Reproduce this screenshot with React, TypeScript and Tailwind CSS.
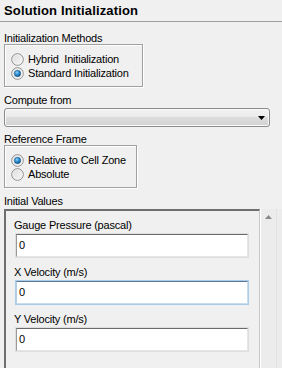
import React from "react";

const Radio = ({ checked }: { checked?: boolean }) => (
    <svg width="13" height="13" viewBox="0 0 13 13" className="shrink-0">
        <defs>
            <linearGradient id="rg" x1="0" y1="0" x2="1" y2="1">
                <stop offset="0" stopColor="#d8d8d8" />
                <stop offset="1" stopColor="#fbfbfb" />
            </linearGradient>
            <radialGradient id="dot" cx="0.4" cy="0.35" r="0.7">
                <stop offset="0" stopColor="#8fd4fb" />
                <stop offset="0.5" stopColor="#2a8ccf" />
                <stop offset="1" stopColor="#0d4f80" />
            </radialGradient>
        </defs>
        <circle cx="6.5" cy="6.5" r="5.8" fill="url(#rg)" stroke="#8a8a8a" strokeWidth="1" />
        <circle cx="6.5" cy="6.5" r="4.6" fill="none" stroke="#f4f4f4" strokeWidth="0.8" />
        {checked && <circle cx="6.5" cy="6.5" r="3.2" fill="url(#dot)" stroke="#1b5380" strokeWidth="0.5" />}
    </svg>
);

const Label = ({ children, className = "" }: { children: React.ReactNode; className?: string }) => (
    <div className={`h-[12px] leading-[12px] whitespace-nowrap ${className}`}>{children}</div>
);

const RadioRow = ({ label, checked }: { label: string; checked?: boolean }) => (
    <div className="flex h-[14px] items-center gap-[4px] leading-[14px]">
        <Radio checked={checked} />
        <span className="whitespace-pre">{label}</span>
    </div>
);

const Field = ({ label, focused }: { label: string; focused?: boolean }) => (
    <div className="mt-[8px] first:mt-0">
        <Label className="ml-[8px]">{label}</Label>
        <div
            className={`mt-[2px] ml-[9px] h-[25px] w-[234px] border ${
                focused ? "border-[#a8cbe8]" : "border-[#dedede]"
            }`}
        >
            <div
                className={`h-full border-t border-l border-r border-b bg-white pl-[2px] leading-[20px] ${
                    focused
                        ? "border-t-[#5b7896] border-l-[#b5cde2] border-r-[#c9dcec] border-b-[#c9dcec]"
                        : "border-t-[#6a6a6a] border-l-[#9a9a9a] border-r-[#e6e6e6] border-b-[#e6e6e6]"
                }`}
            >
                0
            </div>
        </div>
    </div>
);

export default function App() {
    return (
        <div
            className="h-[368px] w-[282px] overflow-hidden bg-[#f0f0f0] text-[11px] tracking-[-0.2px] text-black"
            style={{ fontFamily: '"Liberation Sans", Arial, sans-serif' }}
        >
            <div className="h-[22px] border-b border-[#a0a0a0] pl-[4px] pt-[2px] text-[13px] font-bold leading-[17px] tracking-[0.15px]">
                Solution Initialization
            </div>

            <div className="px-[4px]">
                <Label className="mt-[10px]">Initialization Methods</Label>
                <div className="h-[43px] w-[139px] border border-[#a0a0a0] pl-[6px] pt-[7px] shadow-[inset_1px_1px_0_#ffffff,1px_1px_0_#ffffff]">
                    <RadioRow label="Hybrid  Initialization" />
                    <RadioRow label="Standard Initialization" checked />
                </div>

                <Label className="mt-[7px]">Compute from</Label>
                <div className="mt-[2px] flex h-[19px] w-[266px] items-center justify-end rounded-[3px] border border-[#8c8c8c] bg-[linear-gradient(#f3f3f3_0%,#ebebeb_45%,#dddddd_50%,#d2d2d2_100%)] pr-[4px] shadow-[inset_0_0_0_1px_#fafafa]">
                    <svg width="7" height="4" viewBox="0 0 7 4">
                        <path d="M0 0h7L3.5 4z" fill="#000" />
                    </svg>
                </div>

                <Label className="mt-[6px]">Reference Frame</Label>
                <div className="h-[43px] w-[133px] border border-[#a0a0a0] pl-[6px] pt-[7px] shadow-[inset_1px_1px_0_#ffffff,1px_1px_0_#ffffff]">
                    <RadioRow label="Relative to Cell Zone" checked />
                    <RadioRow label="Absolute" />
                </div>

                <Label className="mt-[7px]">Initial Values</Label>
            </div>

            <div className="mt-[2px] flex pl-[4px]">
                <div className="h-[200px] w-[256px] border-t-2 border-l-2 border-r border-t-[#6f6f6f] border-l-[#6f6f6f] border-r-[#c8c8c8] pt-[8px]">
                    <Field label="Gauge Pressure (pascal)" />
                    <Field label="X Velocity (m/s)" focused />
                    <Field label="Y Velocity (m/s)" />
                </div>
                <div className="flex h-[200px] w-[22px] border-l border-white bg-[#ececec]">
                    <div className="flex w-[16px] justify-center border-r border-[#e2e2e2] pt-[6px]">
                        <svg width="7" height="4" viewBox="0 0 7 4">
                            <path d="M0 4h7L3.5 0z" fill="#8a8a8a" />
                        </svg>
                    </div>
                </div>
            </div>
        </div>
    );
}
